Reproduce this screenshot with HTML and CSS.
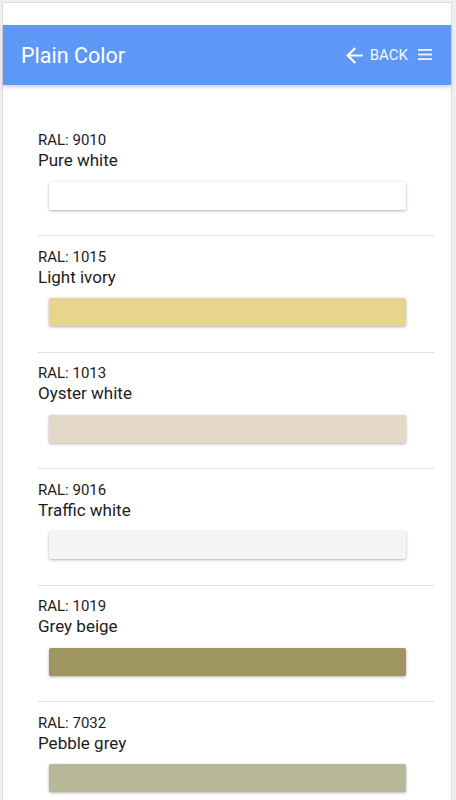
FILE: index.html
```html
<!DOCTYPE html>
<html lang="en">
<head>
<meta charset="utf-8">
<title>Plain Color</title>
<link rel="stylesheet" href="styles.css">
</head>
<body>
<div class="device">
  <div class="statusbar"></div>
  <header class="toolbar">
    <h1 class="title">Plain Color</h1>
    <div class="actions">
      <a class="back">
        <svg class="back-icon" viewBox="0 0 24 24" width="25" height="25"><path d="M20 11H7.83l5.59-5.59L12 4l-8 8 8 8 1.41-1.41L7.83 13H20v-2z" fill="#fff"/></svg>
        <span class="back-label">BACK</span>
      </a>
      <svg class="menu-icon" viewBox="0 0 14 12" width="14" height="12"><rect x="0" y="0" width="14" height="1.8" fill="#fff"/><rect x="0" y="4.6" width="14" height="1.8" fill="#fff"/><rect x="0" y="9.2" width="14" height="1.8" fill="#fff"/></svg>
    </div>
  </header>
  <main class="list">
    <section class="item">
      <div class="code">RAL: 9010</div>
      <div class="name">Pure white</div>
      <div class="swatch" style="background:#ffffff"></div>
    </section>
    <section class="item">
      <div class="code">RAL: 1015</div>
      <div class="name">Light ivory</div>
      <div class="swatch" style="background:#e7d58e"></div>
    </section>
    <section class="item">
      <div class="code">RAL: 1013</div>
      <div class="name">Oyster white</div>
      <div class="swatch" style="background:#e3d9c6"></div>
    </section>
    <section class="item">
      <div class="code">RAL: 9016</div>
      <div class="name">Traffic white</div>
      <div class="swatch" style="background:#f4f4f4"></div>
    </section>
    <section class="item">
      <div class="code">RAL: 1019</div>
      <div class="name">Grey beige</div>
      <div class="swatch" style="background:#9f9560"></div>
    </section>
    <section class="item">
      <div class="code">RAL: 7032</div>
      <div class="name">Pebble grey</div>
      <div class="swatch" style="background:#b8b899"></div>
    </section>
  </main>
</div>
</body>
</html>
```
FILE: styles.css
```css
html, body {
  margin: 0;
  padding: 0;
  height: 100%;
  overflow: hidden;
}
body {
  background: #efefef;
  font-family: Roboto, "Liberation Sans", Arial, sans-serif;
  color: #1c1c1c;
}
.device {
  margin: 3px 5px 0 3px;
  background: #ffffff;
  box-shadow: 0 0 0 1px #dcdcdc;
  min-height: 820px;
}
.statusbar {
  height: 22px;
  background: #ffffff;
}
.toolbar {
  height: 60px;
  background: #5f97f6;
  display: flex;
  align-items: center;
  justify-content: space-between;
  padding: 0 19px 0 18px;
  box-shadow: 0 2px 4px rgba(0, 0, 0, 0.18);
  position: relative;
  z-index: 1;
}
.title {
  margin: 0;
  font-weight: 400;
  font-size: 21.5px;
  color: #ffffff;
  line-height: 1;
  padding-top: 1px;
}
.actions {
  display: flex;
  align-items: center;
}
.back {
  display: flex;
  align-items: center;
  color: #f4f8ff;
  text-decoration: none;
}
.back-icon {
  display: block;
  margin-right: 3px;
}
.back-label {
  font-size: 15px;
  letter-spacing: 0;
  line-height: 1;
}
.menu-icon {
  display: block;
  margin-left: 10px;
  opacity: 0.92;
}
.list {
  padding-top: 34.5px;
}
.item {
  margin: 0 17px 0 35px;
  padding-top: 10.5px;
  border-bottom: 1px solid #e0e0e0;
}
.code {
  font-size: 15px;
  line-height: 20px;
}
.name {
  font-size: 17px;
  line-height: 20px;
}
.swatch {
  height: 28px;
  margin: 11.5px 28px 25.5px 11px;
  border-radius: 2px;
  box-shadow: 0 1px 3px rgba(0, 0, 0, 0.3), 0 0 1px rgba(0, 0, 0, 0.08);
}
```
